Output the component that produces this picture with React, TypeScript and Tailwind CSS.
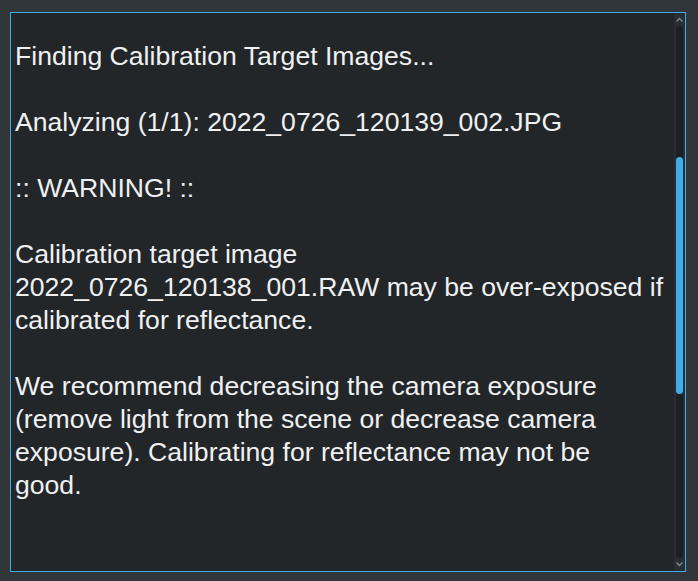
import React from "react";

const lines = [
  "Finding Calibration Target Images...",
  "",
  "Analyzing (1/1): 2022_0726_120139_002.JPG",
  "",
  ":: WARNING! ::",
  "",
  "Calibration target image",
  "2022_0726_120138_001.RAW may be over-exposed if",
  "calibrated for reflectance.",
  "",
  "We recommend decreasing the camera exposure",
  "(remove light from the scene or decrease camera",
  "exposure). Calibrating for reflectance may not be",
  "good.",
];

export default function App() {
  return (
    <div className="w-[698px] h-[581px] bg-[#31363b] pt-[12px] pl-[10px] pr-[12px] pb-[9px] overflow-hidden">
      <div className="w-full h-full border border-[#3daee9] bg-[#232629] flex">
        <div
          className="flex-1 pl-[4px] pt-[27px] text-[#eff0f1] text-[26.6px] leading-[33px] overflow-hidden"
          style={{ fontFamily: '"Liberation Sans", Arial, sans-serif' }}
        >
          {lines.map((l, i) => (
            <div key={i} className="h-[33px] whitespace-nowrap">
              {l}
            </div>
          ))}
        </div>
        <div className="w-[11px] bg-[#2a2e32] flex flex-col items-center">
          <svg width="9" height="8" viewBox="0 0 9 8" className="mt-[3px] shrink-0">
            <path d="M1.5 5.5 L4.5 2.5 L7.5 5.5" stroke="#7f8c8d" strokeWidth="1.3" fill="none" />
          </svg>
          <div className="w-[7px] flex-1 bg-[#1d2023] rounded-full mt-[2px] mb-[2px] flex flex-col">
            <div className="h-[131px] shrink-0" />
            <div className="h-[237px] bg-[#3daee9] rounded-full" />
          </div>
          <svg width="9" height="8" viewBox="0 0 9 8" className="mb-[3px] shrink-0">
            <path d="M1.5 2.5 L4.5 5.5 L7.5 2.5" stroke="#7f8c8d" strokeWidth="1.3" fill="none" />
          </svg>
        </div>
      </div>
    </div>
  );
}
